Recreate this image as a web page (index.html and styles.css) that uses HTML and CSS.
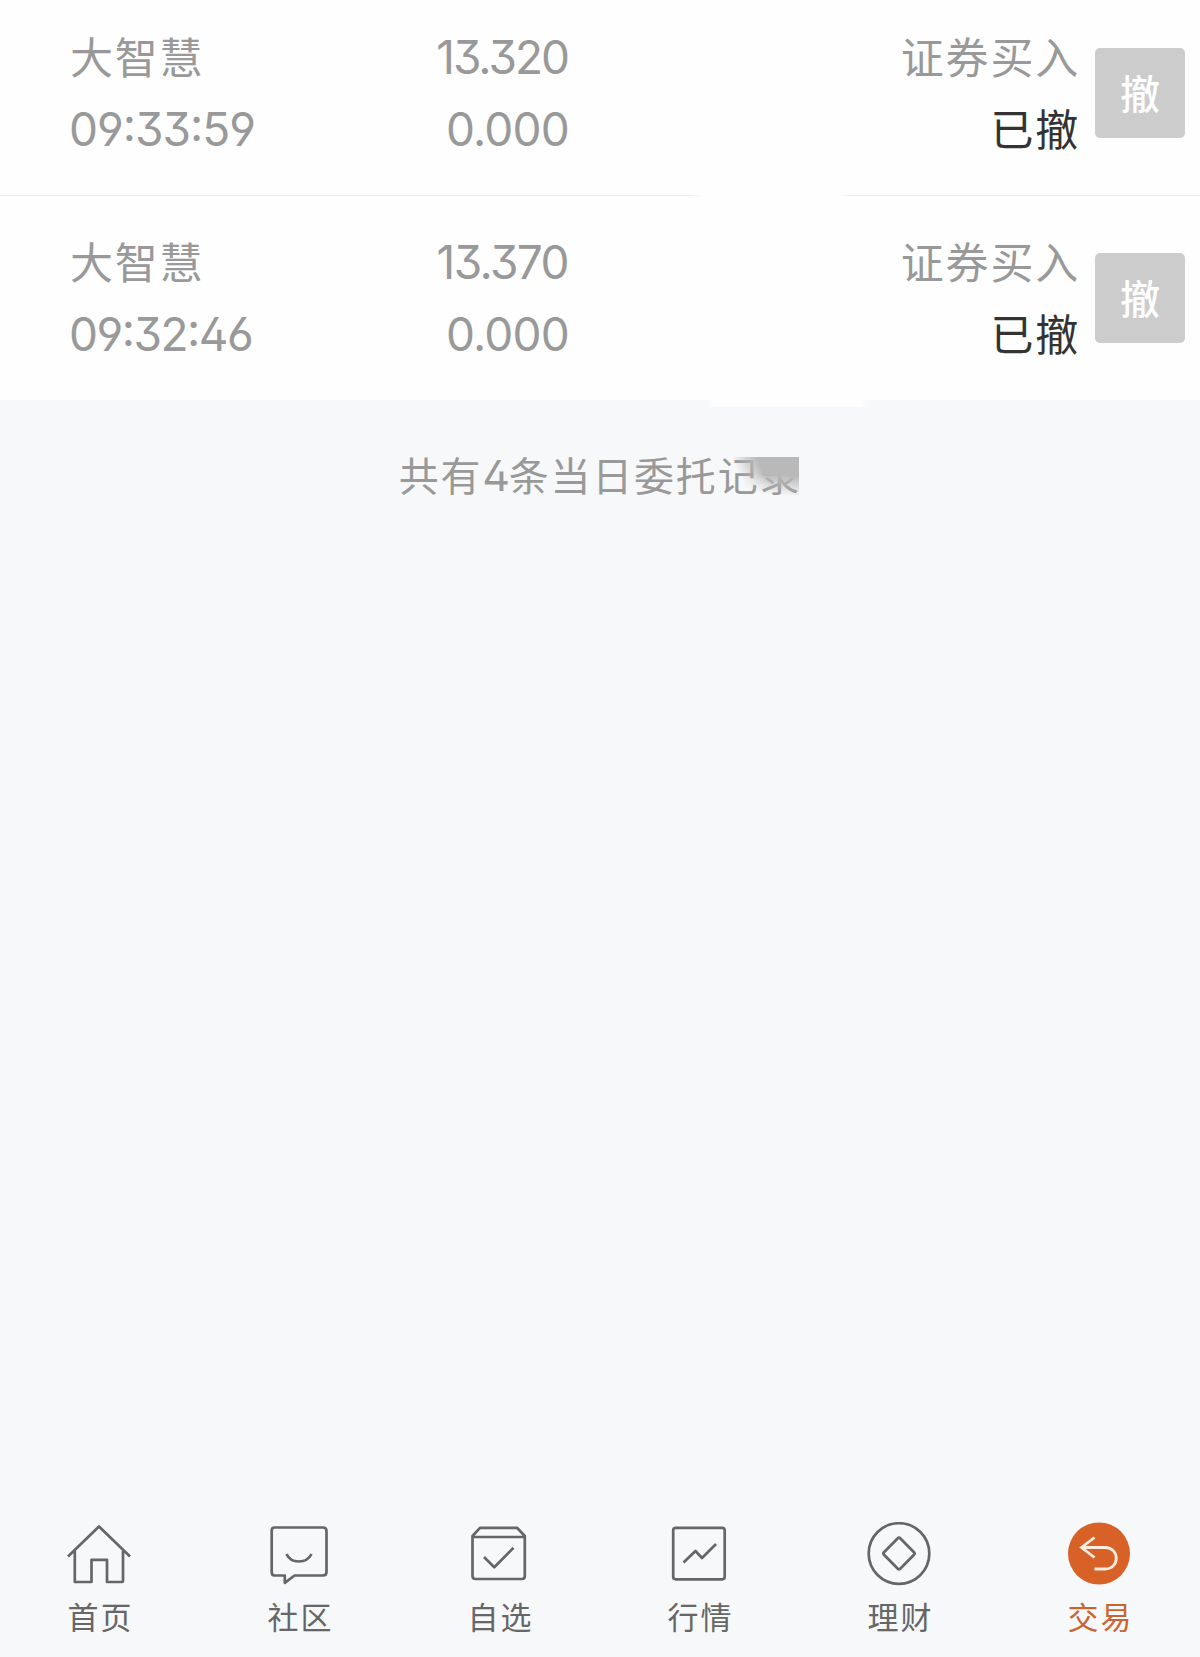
FILE: index.html
```html
<!DOCTYPE html>
<html lang="zh-CN">
<head>
<meta charset="utf-8">
<title>当日委托</title>
<link rel="stylesheet" href="styles.css">
</head>
<body>
<main class="orders">
  <section class="order">
    <div class="col stock"><span>大智慧</span><span class="num time">09:33:59</span></div>
    <div class="col price"><span class="num">13.320</span><span class="num zero">0.000</span></div>
    <div class="col status"><span>证券买入</span><span class="done">已撤</span></div>
    <button class="cancel">撤</button>
  </section>
  <section class="order last">
    <div class="col stock"><span>大智慧</span><span class="num time">09:32:46</span></div>
    <div class="col price"><span class="num">13.370</span><span class="num zero">0.000</span></div>
    <div class="col status"><span>证券买入</span><span class="done">已撤</span></div>
    <button class="cancel">撤</button>
  </section>
  <p class="summary"><span class="summary-text">共有<span class="count">4</span>条当日委托记录<i class="smudge"></i></span></p>
</main>
<nav class="tabs">
  <a class="tab"><svg class="icon" viewBox="0 0 72 72"><path d="M5 34.5 36 4.5 67 34.5M11.800 29V60Q11.800 60 13 60H28.500V37.800H44V60H59Q60 60 60 59V29"/></svg><span>首页</span></a>
  <a class="tab"><svg class="icon" viewBox="0 0 72 72"><path d="M11 5.500H60Q63.500 5.500 63.500 9V50Q63.500 53.500 60 53.500H31.500L21.800 60.800V53.500H11.500Q8.700 53.500 8.700 50V8.500Q8.700 5.500 11.500 5.500ZM23.500 32C28 42 43.500 42 48.500 32"/></svg><span>社区</span></a>
  <a class="tab"><svg class="icon" viewBox="0 0 72 72"><path d="M9.500 14 17 5.800H54L61.800 14V54Q61.800 57 59 57H12.500Q9.500 57 9.500 54ZM9.500 15H61.800M21 35 31.300 45.200 50.500 25.800"/></svg><span>自选</span></a>
  <a class="tab"><svg class="icon" viewBox="0 0 72 72"><rect x="10.200" y="5.800" width="51.500" height="51.500" rx="2.500"/><path d="M20.500 40.500 32.500 29 39 36 53 22"/></svg><span>行情</span></a>
  <a class="tab"><svg class="icon" viewBox="0 0 72 72"><circle cx="36" cy="31.500" r="30.300"/><path d="M34.800 16.200Q36 15 37.200 16.200L51 30.200Q52.200 31.500 51 32.800L37.200 46.800Q36 48 34.800 46.800L21 32.800Q19.800 31.500 21 30.200Z"/></svg><span>理财</span></a>
  <a class="tab active"><svg class="icon" viewBox="0 0 72 72"><circle class="disc" cx="36" cy="31.500" r="31"/><path class="arrow" d="M31.500 15.500 18.500 25.500 31.500 35.500M19 25.500H42C57 25.500 57 47 42 47H31.500"/></svg><span>交易</span></a>
</nav>
</body>
</html>
```
FILE: styles.css
```css
* { box-sizing: border-box; }
body {
  margin: 0;
  height: 1657px;
  display: flex;
  flex-direction: column;
  justify-content: space-between;
  background: #f7f8fa;
  color: #999;
  font-family: "Noto Sans CJK SC", sans-serif;
}
.order {
  display: flex;
  height: 196px;
  padding: 19px 15px 0 70px;
  background:
    linear-gradient(90deg, #ebebeb 690px, #fefefe 702px, #fefefe 838px, #ebebeb 850px) 0 100% / 100% 1px no-repeat,
    #fefefe;
}
.order.last {
  position: relative;
  height: 204px;
  padding-top: 28px;
  background: #fefefe;
}
.order.last::after {
  content: "";
  position: absolute;
  left: 706px;
  top: 204px;
  width: 164px;
  height: 7px;
  background: linear-gradient(90deg, transparent, #fefefe 8px, #fefefe 154px, transparent);
}
.col {
  display: flex;
  flex-direction: column;
  font-size: 43px;
  line-height: 72px;
  letter-spacing: 1.8px;
  white-space: nowrap;
}
.stock { width: 300px; }
.price { width: 200px; padding: 2px 2px 0 0; align-items: flex-end; }
.status { width: 510px; align-items: flex-end; }
.num {
  font-family: Inter, sans-serif;
  font-size: 46px;
  letter-spacing: -2px;
  font-feature-settings: "cv02", "cv03", "cv04", "cv09", "case";
}
.last .num { letter-spacing: -1.6px; }
.num.time { padding-top: 2px; letter-spacing: -1px; margin-left: -1px; }
.last .num.time { letter-spacing: -1.5px; }
.num.zero { letter-spacing: -.8px; margin-right: -1px; }
.done { color: #333; }
.cancel {
  width: 90px;
  height: 90px;
  margin: 29px 0 0 15px;
  padding: 0 0 2px;
  border: 0;
  border-radius: 5px;
  background: #ccc;
  color: #fff;
  font: 500 40px/86px "Noto Sans CJK SC", sans-serif;
}
.summary {
  margin: 0;
  padding-top: 44px;
  font-size: 40px;
  line-height: 60px;
  letter-spacing: 1.8px;
  text-align: center;
}
.summary-text { position: relative; display: inline-block; white-space: nowrap; }
.count {
  font-family: Inter, sans-serif;
  font-size: 43px;
  letter-spacing: -1.5px;
  line-height: 1;
  font-feature-settings: "cv02";
}
.smudge {
  position: absolute;
  right: 2px;
  top: 13px;
  width: 76px;
  height: 40px;
  background: linear-gradient(184deg, #b9b9b9 42%, rgba(185, 185, 185, 0) 88%);
  -webkit-mask-image: linear-gradient(65deg, transparent 28%, #000 55%);
  mask-image: linear-gradient(65deg, transparent 28%, #000 55%);
}
.tabs { display: flex; height: 135px; }
.tab {
  flex: 1;
  display: flex;
  flex-direction: column;
  align-items: center;
  color: #666;
  font-size: 31px;
  line-height: 44px;
  letter-spacing: 2px;
}
.tab span { padding-left: 1px; }
.icon {
  width: 72px;
  height: 72px;
  margin-left: -2px;
  fill: none;
  stroke: #666;
  stroke-width: 2.7;
  stroke-linejoin: round;
}
.active { color: #c96531; }
.icon .disc { fill: #d86128; stroke: none; }
.icon .arrow { stroke: #ffeddf; stroke-width: 2.8; stroke-linejoin: miter; }
```
